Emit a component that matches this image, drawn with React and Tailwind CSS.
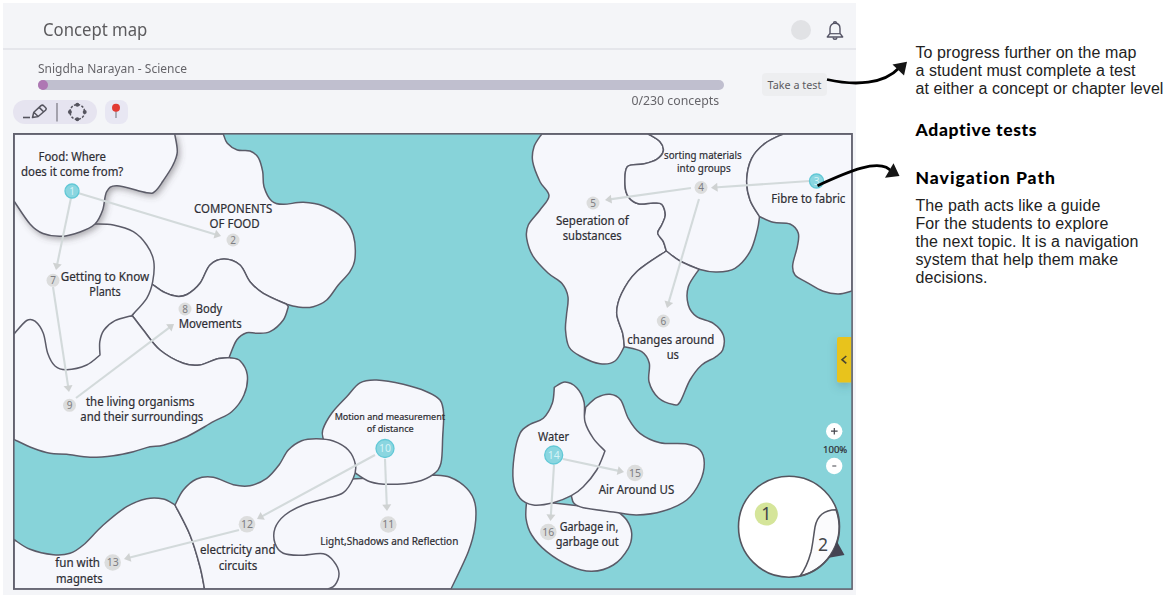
import React from "react";

// Turns a list of points into a smooth curve through all of them.
function curve(points) {
  let d = "";
  for (let i = 0; i < points.length - 1; i++) {
    const p0 = points[i - 1] || points[i];
    const p1 = points[i];
    const p2 = points[i + 1];
    const p3 = points[i + 2] || p2;
    const c = [
      p1[0] + (p2[0] - p0[0]) / 6,
      p1[1] + (p2[1] - p0[1]) / 6,
      p2[0] - (p3[0] - p1[0]) / 6,
      p2[1] - (p3[1] - p1[1]) / 6,
    ];
    d += ` C${c[0]} ${c[1]} ${c[2]} ${c[3]} ${p2[0]} ${p2[1]}`;
  }
  return d;
}

// A region is a list of runs; runs meet at sharp corners.
function regionPath(runs) {
  return (
    runs
      .map((run, i) => `${i ? "L" : "M"}${run[0][0]} ${run[0][1]}${curve(run)}`)
      .join(" ") + " Z"
  );
}

const rev = (a) => [...a].reverse();

const foodBodyBorder = [[286.7, 304.3], [263.3, 293.3], [250, 281.7], [240, 265], [224, 259], [210, 265], [200, 283.3], [187, 294.5], [176.7, 296.3], [165, 292.7], [152, 284]];
const bodyLivingBorder = [[230, 357.7], [216.7, 359], [200, 365], [183.3, 363.3], [160, 350], [143.3, 330], [132.3, 315.7]];
const changesSepBorder = [[624.3, 346.7], [622.7, 333.3], [616.7, 313.3], [621.7, 293.3], [636.7, 271.7], [666.3, 251]];
const sepSortBorder = [[666.3, 251], [663.3, 241.7], [657.7, 233.3], [661.7, 225], [665.3, 215], [661.7, 204.3], [653.3, 203], [638.3, 203.7], [628.3, 196.7], [625, 185], [627.3, 166.7], [643.3, 164], [656.7, 159.3], [663.3, 151], [660, 141.7], [648.3, 134]];
const fibreBorder = [[759.5, 216.5], [750, 200], [746.7, 180], [751.7, 158.3], [765, 143.3], [783, 134]];
const magnetBorder = [[175, 505], [190, 535], [200, 566.7], [204.5, 589]];

const REGIONS = [
  [
    [[14, 134], [14, 134]],
    [[223.3, 134], [227.3, 143.3], [237.3, 150], [250, 151], [258.3, 157.7], [262.7, 171.7], [264, 186.7], [271.7, 201], [283.3, 204.3], [303.3, 202.3], [323.3, 206], [343.3, 218.3], [353.3, 235], [355, 258.3], [350, 271.7], [338.3, 285], [326.7, 300], [313.3, 306.7], [300, 307.3], [286.7, 304.3]],
    foodBodyBorder,
    [[100, 284], [14, 284]],
  ],
  [
    rev(foodBodyBorder),
    [[288.3, 306.7], [283.3, 320], [270, 331.7], [256.7, 333.3], [246.7, 332.7], [236.7, 340], [229.3, 357]],
    bodyLivingBorder,
  ],
  [
    rev(bodyLivingBorder),
    [[230, 357.7], [240, 360.7], [247.3, 375], [244, 395], [231.7, 411.7], [213.3, 421.7], [186.7, 436.7], [163.3, 445.3], [150, 446.7], [133.3, 451.7], [113.3, 455.7], [90, 457.3], [66.7, 454.3], [50, 453.3], [33.3, 448.3], [14, 439.5]],
    [[14, 320], [60, 316]],
  ],
  [
    [[95, 224], [113.3, 225], [133.3, 231.7], [146.7, 245], [153.7, 261], [152.7, 281.7], [146.7, 298.3], [131.7, 315.7]],
    [[131.7, 315.7], [115, 320.7], [104, 330], [99.8, 341.7], [100, 355]],
    [[100, 355], [86.7, 365], [66.7, 369.7], [55, 366], [47.7, 353.3], [43.3, 333.3], [35, 321.2], [26.7, 320.5], [14, 334]],
    [[14, 190], [50, 210]],
  ],
  [
    [[541.7, 134], [534, 146.7], [532.7, 161.7], [540, 181.7], [549, 195.7], [540, 210], [528.3, 225], [526.7, 238.3], [533.3, 256.7], [548, 273], [562, 283.5], [568, 297], [566.5, 315], [565.5, 330], [569, 347], [580, 356], [600, 363.8], [615, 361], [624.3, 346.7]],
    changesSepBorder,
    sepSortBorder,
  ],
  [
    rev(sepSortBorder),
    [[666.3, 251], [680, 261], [699, 269.3], [716.7, 272], [735, 268.3], [750, 251.7], [757.3, 230], [759.5, 216.5]],
    fibreBorder,
  ],
  [
    rev(fibreBorder),
    [[759.5, 216.5], [773.3, 222.3], [790, 224], [798.3, 233.3], [797.3, 246.7], [792.7, 265], [795, 275], [806.7, 282.3], [823.3, 291.3], [838.3, 294], [852, 291]],
    [[852, 134], [852, 134]],
  ],
  [
    changesSepBorder,
    [[666.3, 251], [680, 261], [699, 269.3]],
    [[699, 269.3], [688.3, 286.7], [688.3, 305], [696.7, 316.7], [713.3, 323.3], [723.3, 335], [722.7, 350], [715, 357.3], [701.7, 365], [690, 380], [680, 402], [673.3, 404.5], [658.3, 397.7], [649, 381.7], [649.3, 363.3], [641.7, 351.7], [624.3, 346.7]],
  ],
  [
    [[14, 539.5], [30, 549.3], [53.3, 554.7], [70, 553.3], [83.3, 545], [103.3, 525], [126.7, 506.7], [146.7, 498.7], [163.3, 499], [175, 505]],
    magnetBorder,
    [[14, 589], [14, 589]],
  ],
  [
    [[433.3, 475], [450, 477.3], [466.7, 488.3], [475, 503.3], [475, 526.7], [468.3, 551.7], [451, 589]],
    [[290, 589], [260, 540], [330, 480]],
  ],
  [
    [[323.3, 439.3], [322.7, 430], [331.7, 413.3], [346.7, 396.7], [360, 382.8], [376.7, 380], [403.3, 384.3], [426.7, 391.7], [440, 400], [443.6, 413.3], [442.7, 436.7], [441, 463], [433.3, 474.3], [416.7, 481.7], [390, 484.3], [370, 481.7], [354, 472]],
  ],
  [
    [[175, 505], [183.3, 490], [196.7, 479], [213.3, 477.3], [233.3, 484.7], [250, 485.7], [266.7, 478.3], [279, 465], [288.3, 450], [301.7, 440.7], [316.7, 438.7], [333.3, 441], [348.3, 450], [355.5, 465], [353.3, 478.3], [343.3, 492.7], [326.7, 498.3], [303.3, 505], [285, 515], [275, 528.3], [275, 543.3], [283.3, 553.3], [300, 555.3], [323.3, 553.8], [334, 561.7], [339, 573.3], [335, 585], [328, 589]],
    rev(magnetBorder),
  ],
  [
    [[526.7, 500], [526, 518.3], [531.7, 535], [546.7, 551.7], [570, 566], [591.7, 571.3], [613.3, 565], [628.3, 548.3], [631.7, 533.3], [626.7, 520], [616, 510]],
  ],
  [
    [[585.7, 407.3], [596.7, 397.7], [610, 394.3], [620.7, 400], [628.3, 418.3], [640, 433.3], [660, 442.7], [686.7, 444], [700, 450], [704.3, 463.3], [700, 481.7], [686.7, 500], [663.3, 511], [636.7, 515], [613.3, 512], [583.3, 507.7], [574, 503.3], [571.3, 495.7]],
  ],
  [
    [[554.3, 387.3], [565, 382], [576.7, 387.7], [584, 401.7], [585, 421.7], [593.3, 438.3], [605, 451]],
    [[605, 451], [596.7, 470], [583.3, 486.7], [571.3, 495.7], [553.3, 502.7], [533.3, 505], [520, 498.3], [513.3, 481.7], [514.3, 455], [520, 433.3], [530, 424.3], [543.3, 418.3], [552.3, 403.3], [554.3, 387.3]],
  ],
];

const START_REGION = [
  [[14, 134], [14, 134]],
  [[174.7, 134], [177.3, 151.7], [173, 165], [163, 181], [155, 191.3], [146.7, 192.7], [117, 185.7], [106.7, 191.7], [102.7, 210], [95, 224], [80, 232], [61.7, 236.3], [43, 233.5], [30, 224], [14, 201]],
];

const ARROWS = [
  [78, 193, 221, 236],
  [71, 198, 56, 270],
  [53, 287, 69, 392],
  [76, 398, 174, 324],
  [810, 181, 711, 187.7],
  [691, 188, 605, 200],
  [699, 199, 667, 308],
  [375, 455, 257, 519],
  [385, 459, 387, 511],
  [239, 530, 124, 559],
  [563, 459, 624, 472],
  [554, 465, 550.5, 521],
];

const NODES = [
  ["1", 72, 191, 7, true],
  ["2", 233, 240, 6.5],
  ["3", 816.5, 181, 7, true],
  ["4", 701, 187.5, 6.5],
  ["5", 593, 203, 6.5],
  ["6", 663.3, 321, 6.5],
  ["7", 53, 280.3, 6.5],
  ["8", 185, 309, 6.5],
  ["9", 69.5, 405.3, 6.5],
  ["10", 385, 448.5, 9, true],
  ["11", 388.3, 524.5, 8.3],
  ["12", 247, 524.3, 8.3],
  ["13", 112.7, 562.5, 8.3],
  ["14", 553.7, 455, 9, true],
  ["15", 635, 473, 8.3],
  ["16", 548.3, 532, 8.3],
];

const LABELS = [
  ["Food: Where", 38.5, 160.7, 67.5, 12.5],
  ["does it come from?", 21, 175.7, 102.3, 12.5],
  ["COMPONENTS", 194, 212.7, 78.3, 12.5],
  ["OF FOOD", 209.5, 228.2, 50.2, 12.5],
  ["Getting to Know", 60.7, 281, 88.5, 12.5],
  ["Plants", 89.3, 296.3, 31.4, 12.5],
  ["Body", 195.7, 312.5, 26.5, 12.5],
  ["Movements", 178.7, 327.7, 63, 12.5],
  ["the living organisms", 86, 405.5, 108.5, 12.5],
  ["and their surroundings", 80.3, 420.7, 123, 12.5],
  ["Seperation of", 556, 224.9, 72.7, 12.5],
  ["substances", 562.7, 239.9, 59, 12.5],
  ["sorting materials", 664, 158.5, 77.7, 10.5],
  ["into groups", 677, 171.5, 53.7, 10.5],
  ["Fibre to fabric", 771.3, 203.2, 74, 12.5],
  ["changes around", 627.3, 344.2, 87, 12.5],
  ["us", 666.7, 359.2, 12.3, 12.5],
  ["Motion and measurement", 334.7, 419.5, 110.3, 9.6],
  ["of distance", 366.7, 431.8, 47, 9.6],
  ["Light,Shadows and Reflection", 320.3, 544.6, 138, 10.8],
  ["electricity and", 200, 554.4, 75.5, 12.5],
  ["circuits", 218.7, 569.6, 38.6, 12.5],
  ["fun with", 55.3, 567.4, 44.7, 12.5],
  ["magnets", 56, 582.6, 46.7, 12.5],
  ["Water", 538, 440.7, 31, 12.5],
  ["Air Around US", 598.7, 494.2, 75.6, 12.5],
  ["Garbage in,", 559.7, 530.8, 58.6, 12],
  ["garbage out", 555.7, 545.6, 63, 12],
  ["100%", 823, 453, 24.3, 9.8],
];

function Arrow({ from: [x1, y1, x2, y2] }) {
  const angle = (Math.atan2(y2 - y1, x2 - x1) * 180) / Math.PI;
  const len = Math.hypot(x2 - x1, y2 - y1);
  return (
    <g transform={`translate(${x1} ${y1}) rotate(${angle})`}>
      <path d={`M0 0H${len - 3}`} stroke="#d3dadb" strokeWidth="2.1" />
      <path d={`M${len} 0L${len - 6.5} -4.5V4.5Z`} fill="#cfd2d2" />
    </g>
  );
}

function ConceptMap() {
  return (
    <svg
      className="block h-[457px] w-[840px]"
      viewBox="13 133 840 457"
      fontFamily='"Noto Sans", sans-serif'
    >
      <defs>
        <clipPath id="frame">
          <rect x="14" y="134" width="838" height="455" />
        </clipPath>
        <filter id="lift" x="-10%" y="-10%" width="130%" height="130%">
          <feDropShadow dx="2" dy="2.5" stdDeviation="3" floodColor="#504850" floodOpacity="0.45" />
        </filter>
        <filter id="soft" x="-100%" y="-50%" width="300%" height="200%">
          <feDropShadow dx="0" dy="4" stdDeviation="4" floodColor="#405060" floodOpacity="0.25" />
        </filter>
      </defs>
      <g clipPath="url(#frame)">
        <rect x="13" y="133" width="840" height="457" fill="#87d3d9" />
        <g fill="#f6f7fc" stroke="#5b5b68" strokeWidth="1.5" strokeLinejoin="round">
          {REGIONS.map((r, i) => (
            <path key={i} d={regionPath(r)} />
          ))}
          <path d={regionPath(START_REGION)} filter="url(#lift)" />
        </g>
      </g>
      {ARROWS.map((a, i) => (
        <Arrow key={i} from={a} />
      ))}
      {NODES.map(([n, x, y, r, active]) => (
        <g key={n}>
          <circle
            cx={x}
            cy={y}
            r={r}
            fill={active ? "#8ad6e0" : "#dcdddd"}
            stroke={active ? "#62c8d6" : "none"}
            strokeWidth="1.3"
          />
          <text
            x={x}
            y={y + 3.9}
            textAnchor="middle"
            fontSize={n.length > 1 ? 10.5 : 10}
            fill={active ? "#d5f3f7" : "#7e7e83"}
          >
            {n}
          </text>
        </g>
      ))}
      <g filter="url(#soft)">
        <path d="M851.5 337H839a2 2 0 0 0-2 2v41.5a2 2 0 0 0 2 2h12.5Z" fill="#e8c31c" />
      </g>
      <path d="M846.3 356L842 359.7L846.3 363.4" fill="none" stroke="#4a4530" strokeWidth="1.6" />
      <rect x="13.8" y="133.8" width="838.3" height="455.3" fill="none" stroke="#62626e" strokeWidth="1.6" />
      <g fill="#fff">
        <circle cx="834.2" cy="431.2" r="8.2" />
        <circle cx="834.2" cy="466" r="8.2" />
      </g>
      <path d="M831 431.2h6.6M834.3 428v6.5M832.3 466h4" stroke="#44444c" strokeWidth="1.2" />
      <circle cx="789" cy="526.7" r="50.5" fill="#fff" />
      <path
        d="M836 509.7C823 510 817 516 815 527C813.500 536 813 543 811 552C808 563 804 571 800 576A50.500 50.500 0 0 0 836 509.700Z"
        fill="#fbfbfd"
        stroke="#55555f"
        strokeWidth="1.5"
      />
      <circle cx="789" cy="526.7" r="50.5" fill="none" stroke="#55555f" strokeWidth="1.6" />
      <path d="M837 541.5L844.5 555L829 557.8A50.500 50.500 0 0 0 837 541.5Z" fill="#454452" />
      <circle cx="766.3" cy="514" r="11.5" fill="#d5e59a" />
      <text x="766.3" y="520" textAnchor="middle" fontSize="17.5" fill="#44464a">1</text>
      <text x="823" y="550.5" textAnchor="middle" fontSize="17.5" fill="#44464a">2</text>
      <g fill="#2d2d33" stroke="#2d2d33" strokeWidth="0.2">
        {LABELS.map(([t, x, y, w, size]) => (
          <text key={t} x={x} y={y} fontSize={size} textLength={w} lengthAdjust="spacingAndGlyphs">
            {t}
          </text>
        ))}
      </g>
    </svg>
  );
}

function Toolbar() {
  return (
    <div className="flex gap-2 pl-[10px]">
      <div className="flex h-6 w-[84px] items-center rounded-full bg-[#e6e4f0]">
        <svg className="h-6 w-[84px]" viewBox="0 0 84 24" fill="none" stroke="#55545e">
          <path d="M10 17.500h7" strokeWidth="1.6" />
          <path d="M19.500 17.500L20.800 12.200L28 5.600C29 4.800 30 5 31 6C34 8.800 33.500 9 32.500 10.200L25.200 16.500Z M20.800 12.200L25.200 16.500M26.200 7.400L30.800 12" strokeWidth="1.5" strokeLinejoin="round" />
          <path d="M44 3v18.500" stroke="#77767f" strokeWidth="1.2" />
          <circle cx="64.3" cy="12" r="7.4" strokeWidth="1.5" strokeDasharray="2.4 1.5" />
          <g fill="#55545e" stroke="none">
            <circle cx="64.3" cy="4.7" r="2" />
            <circle cx="64.3" cy="19.3" r="2" />
            <circle cx="56.9" cy="12" r="2" />
            <circle cx="71.7" cy="12" r="2" />
          </g>
        </svg>
      </div>
      <div className="flex h-6 w-[23px] items-center justify-center rounded-lg bg-[#e8e7f3]">
        <svg className="-ml-px h-5 w-3" viewBox="0 0 12 20">
          <path d="M6 8v8" stroke="#8b8b96" strokeWidth="1.3" />
          <circle cx="6" cy="5.7" r="4" fill="#e23a33" />
        </svg>
      </div>
    </div>
  );
}

function BellIcon() {
  return (
    <svg className="h-[21px] w-[18px]" viewBox="0 0 18 21" fill="none" stroke="#565566" strokeWidth="1.4">
      <path d="M4 13.300V8.500C4 5.200 6 3.300 9 3.300S14 5.200 14 8.500V13.300L16.700 17H1.300Z" strokeLinejoin="round" />
      <path d="M4 13.700H14" strokeWidth="1.2" />
      <path d="M7.500 3.200a1.500 1.500 0 0 1 3 0M7.200 17.500a1.800 1.800 0 0 0 3.600 0" />
    </svg>
  );
}

export default function App() {
  return (
    <div className="relative flex h-[595px] w-[1165px] overflow-hidden bg-white pl-[3px] pt-[3px] font-['Noto_Sans',sans-serif]">
      <main className="flex w-[853px] shrink-0 flex-col bg-[#f4f5f8]">
        <header className="flex h-[47px] items-center justify-between border-b-2 border-[#e5e6eb] pl-10 pr-3 pt-[9px]">
          <h1 className="-mt-[3px] origin-left scale-x-[0.955] text-[17.5px] leading-6 text-[#5c5b5e]">Concept map</h1>
          <div className="flex items-center gap-[15px]">
            <span className="size-5 rounded-full bg-[#e1e2e5]" />
            <BellIcon />
          </div>
        </header>
        <section className="flex h-[50px] items-start justify-between pl-[35px] pr-[29px] pt-[9px]">
          <div className="w-[686px]">
            <p className="h-[18px] origin-left scale-x-[0.96] text-[12.5px] leading-5 text-[#66656a]">Snigdha Narayan - Science</p>
            <div className="mt-[3px] h-[10px] rounded-full bg-[#c0bfcf]">
              <div className="size-[10px] rounded-full bg-[#ae77b3]" />
            </div>
            <p className="origin-right scale-x-[0.985] pr-[5px] text-right text-[12.5px] leading-[21px] text-[#66656a]">0/230 concepts</p>
          </div>
          <button className="mt-[14px] h-[23px] w-[65px] whitespace-nowrap rounded bg-[#edeef0] pt-0.5 text-[10.8px] text-[#5c5b61]">Take a test</button>
        </section>
        <Toolbar />
        <div className="pl-[10px] pt-[9px]">
          <ConceptMap />
        </div>
      </main>
      <aside className="flex w-[309px] shrink-0 flex-col pl-[59.5px] pt-[41px] text-[#222]">
        <p className="whitespace-nowrap font-['Liberation_Sans',sans-serif] text-[16px] leading-[18px] tracking-[0.07px]">
          To progress further on the map
          <br />a student must complete a test
          <br />
          at either a concept or chapter level
        </p>
        <h2 className="mt-5 h-6 whitespace-nowrap font-['Lato',sans-serif] text-[17.5px] font-black leading-6 tracking-[0.65px] text-black">Adaptive tests</h2>
        <h2 className="mt-6 h-6 whitespace-nowrap font-['Lato',sans-serif] text-[17.5px] font-black leading-6 tracking-[1px] text-black">Navigation Path</h2>
        <p className="mt-[7px] whitespace-nowrap font-['Liberation_Sans',sans-serif] text-[16px] leading-[18px] tracking-[0.1px]">
          The path acts like a guide
          <br />
          For the students to explore
          <br />
          the next topic. It is a navigation
          <br />
          system that help them make
          <br />
          decisions.
        </p>
      </aside>
      <svg className="pointer-events-none absolute left-[810px] top-[50px] h-[150px] w-[100px]" viewBox="810 50 100 150">
        <g fill="none" stroke="#000" strokeWidth="2.8">
          <path d="M827 79.500C856 86 884 84 899 68" />
          <path d="M817.500 185.700C845 173 882 156 892 172.500" />
        </g>
        <path d="M907 61.700L892.500 64.500L904 75.500Z" fill="#151515" />
        <path d="M899.500 176L893.500 163.300L885 177.700Z" fill="#151515" />
      </svg>
    </div>
  );
}
